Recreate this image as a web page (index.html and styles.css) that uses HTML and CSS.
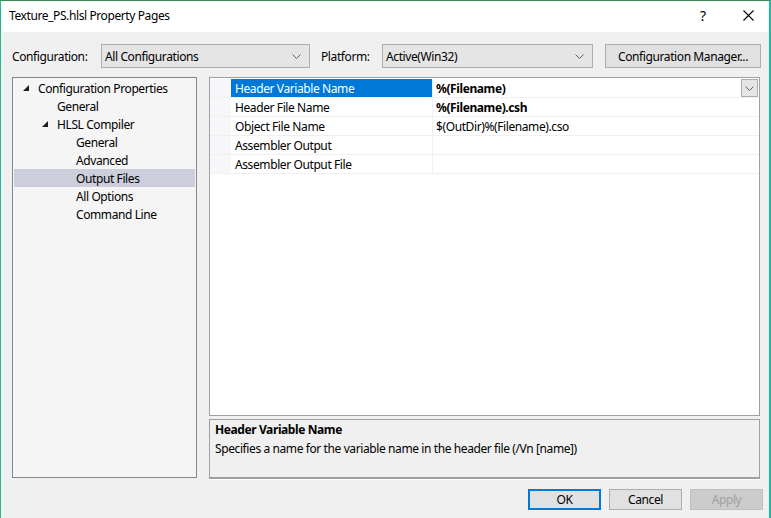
FILE: index.html
```html
<!DOCTYPE html>
<html>
<head>
<meta charset="utf-8">
<title>Texture_PS.hlsl Property Pages</title>
<link rel="stylesheet" href="styles.css">
</head>
<body>
<div class="window">
  <div class="titlebar">
    <span class="title">Texture_PS.hlsl Property Pages</span>
    <span class="help">?</span>
    <span class="close"><svg width="11" height="11" viewBox="0 0 11 11"><path d="M0.5 0.5L10.5 10.5M10.5 0.5L0.5 10.5" stroke="#000" stroke-width="1.1" fill="none"/></svg></span>
  </div>
  <div class="config-row">
    <span class="label lbl-config">Configuration:</span>
    <div class="combo combo-config"><span class="combo-text">All Configurations</span><svg class="chev" width="9" height="5" viewBox="0 0 9 5"><path d="M0.5 0.5L4.5 4.5L8.5 0.5" stroke="#606060" fill="none"/></svg></div>
    <span class="label lbl-platform">Platform:</span>
    <div class="combo combo-platform"><span class="combo-text">Active(Win32)</span><svg class="chev" width="9" height="5" viewBox="0 0 9 5"><path d="M0.5 0.5L4.5 4.5L8.5 0.5" stroke="#606060" fill="none"/></svg></div>
    <div class="btn btn-cm">Configuration Manager...</div>
  </div>
  <div class="main">
    <div class="tree">
      <div class="node l0"><span class="exp"><svg width="6" height="6" viewBox="0 0 6 6"><path d="M6 0L6 6L0 6Z" fill="#1e1e1e"/></svg></span>Configuration Properties</div>
      <div class="node l1"><span class="exp"></span>General</div>
      <div class="node l1"><span class="exp"><svg width="6" height="6" viewBox="0 0 6 6"><path d="M6 0L6 6L0 6Z" fill="#1e1e1e"/></svg></span>HLSL Compiler</div>
      <div class="node l2"><span class="exp"></span>General</div>
      <div class="node l2"><span class="exp"></span>Advanced</div>
      <div class="node l2 selected"><span class="exp"></span>Output Files</div>
      <div class="node l2"><span class="exp"></span>All Options</div>
      <div class="node l2"><span class="exp"></span>Command Line</div>
    </div>
    <div class="right">
      <div class="grid">
        <div class="row">
          <span class="gutter"></span>
          <span class="name active">Header Variable Name</span>
          <span class="value bold">%(Filename)<span class="dd"><svg width="9" height="5" viewBox="0 0 9 5"><path d="M0.5 0.5L4.5 4.5L8.5 0.5" stroke="#606060" fill="none"/></svg></span></span>
        </div>
        <div class="row">
          <span class="gutter"></span>
          <span class="name">Header File Name</span>
          <span class="value bold">%(Filename).csh</span>
        </div>
        <div class="row">
          <span class="gutter"></span>
          <span class="name">Object File Name</span>
          <span class="value">$(OutDir)%(Filename).cso</span>
        </div>
        <div class="row">
          <span class="gutter"></span>
          <span class="name">Assembler Output</span>
          <span class="value"></span>
        </div>
        <div class="row">
          <span class="gutter"></span>
          <span class="name">Assembler Output File</span>
          <span class="value"></span>
        </div>
      </div>
      <div class="desc">
        <div class="desc-title">Header Variable Name</div>
        <div class="desc-text">Specifies a name for the variable name in the header file (/Vn [name])</div>
      </div>
    </div>
  </div>
  <div class="buttons">
    <div class="btn dlg default">OK</div>
    <div class="btn dlg">Cancel</div>
    <div class="btn dlg disabled">Apply</div>
  </div>
</div>
</body>
</html>
```
FILE: styles.css
```css
* { box-sizing: border-box; }
html, body { margin: 0; padding: 0; }
body {
  width: 771px;
  height: 518px;
  overflow: hidden;
  background: #f0f0f0;
  font-family: "Segoe UI", "Noto Sans", sans-serif;
  font-size: 12px;
  letter-spacing: -0.4px;
  color: #000;
}
.window {
  width: 771px;
  height: 518px;
  display: flex;
  flex-direction: column;
  border-left: 1px solid #1fb89a;
  border-right: 2px solid #1fb89a;
  border-top: 1px solid #3c8a55;
  background: #f0f0f0;
}
.titlebar {
  height: 31px;
  flex: none;
  background: #fff;
  display: flex;
  align-items: center;
  padding-left: 8px;
}
.title { flex: 1; font-size: 12px; position: relative; top: -1px; }
.help { width: 45px; font-size: 14px; text-align: left; padding-left: 2px; position: relative; top: -1px; }
.close { width: 26px; display: flex; align-items: center; position: relative; top: -1px; }
.config-row {
  display: flex;
  align-items: center;
  margin-top: 12px;
  padding-left: 11px;
  height: 24px;
  flex: none;
}
.label { display: block; }
.lbl-config { width: 89px; }
.lbl-platform { width: 61px; margin-left: 11px; }
.combo {
  height: 24px;
  border: 1px solid #adadad;
  background: #e5e5e5;
  display: flex;
  align-items: center;
  padding: 0 4px 0 3px;
}
.combo-text { flex: 1; }
.chev { margin-right: 4px; }
.combo-config { width: 209px; }
.combo-platform { width: 211px; }
.btn {
  height: 24px;
  border: 1px solid #adadad;
  background: #e1e1e1;
  display: flex;
  align-items: center;
  justify-content: center;
}
.btn-cm { width: 156px; margin-left: 12px; }
.main {
  display: flex;
  margin-top: 9px;
  padding-left: 11px;
  height: 402px;
  flex: none;
}
.tree {
  width: 185px;
  height: 401px;
  border: 1px solid #828790;
  background: #f5f5f5;
  padding: 1px;
}
.node {
  height: 18px;
  display: flex;
  align-items: center;
  white-space: nowrap;
}
.node.selected { background: #cccedb; }
.exp {
  width: 19px;
  height: 18px;
  display: flex;
  align-items: center;
  padding-left: 4px;
  flex: none;
}
.l0 { padding-left: 5px; }
.l1 { padding-left: 24px; }
.l2 { padding-left: 43px; }
.right {
  margin-left: 12px;
  width: 551px;
  display: flex;
  flex-direction: column;
  gap: 3px;
}
.grid {
  height: 339px;
  flex: none;
  border: 1px solid #a0a0a0;
  background: #fff;
  padding-top: 1px;
}
.row {
  display: flex;
  height: 19px;
  border-bottom: 1px solid #f0f0f0;
}
.gutter { width: 21px; background: #f7f7fa; }
.name {
  width: 202px;
  padding-left: 4px;
  display: flex;
  align-items: center;
  border-right: 1px solid #f0f0f0;
  white-space: nowrap;
}
.name.active { background: #0078d7; color: #fff; }
.value {
  flex: 1;
  padding-left: 3px;
  display: flex;
  align-items: center;
  white-space: nowrap;
}
.bold { font-weight: bold; }
.dd {
  margin-left: auto;
  width: 17px;
  height: 18px;
  border: 1px solid #adadad;
  background: #e5e5e5;
  display: flex;
  align-items: center;
  justify-content: center;
  margin-right: 1px;
}
.desc {
  height: 60px;
  flex: none;
  border: 1px solid #a0a0a0;
  border-bottom-width: 2px;
  box-shadow: 0 1px 0 #fff;
  padding: 0 5px;
}
.desc-title { font-weight: bold; height: 19px; display: flex; align-items: center; }
.desc-text { height: 18px; display: flex; align-items: center; }
.buttons {
  display: flex;
  justify-content: flex-end;
  gap: 8px;
  padding-right: 6px;
  margin-top: 10px;
}
.btn.dlg { width: 73px; height: 21px; }
.btn.default { border: 2px solid #0078d7; }
.btn.disabled { background: #cccccc; border-color: #bfbfbf; color: #a0a0a0; }
```
